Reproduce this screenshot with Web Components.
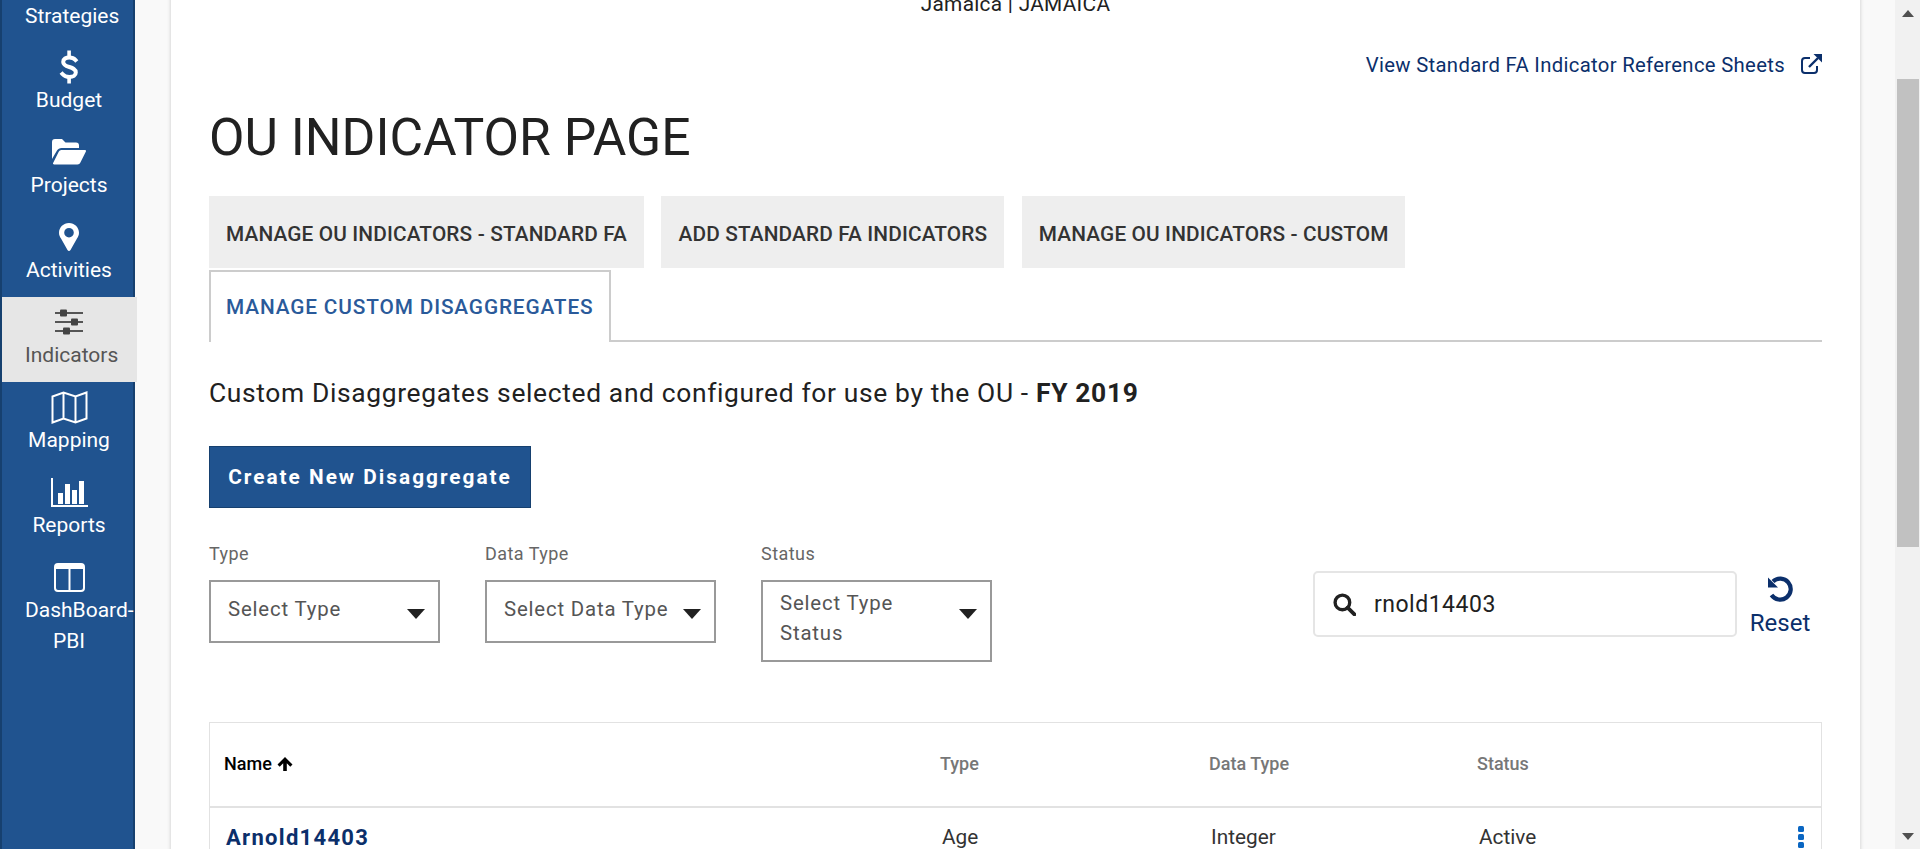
<!DOCTYPE html>
<html>
<head>
<meta charset="utf-8">
<style>
html, body { margin: 0; height: 849px; overflow: hidden; background: #fff; }
body { font-family: Roboto, "Liberation Sans", sans-serif; color: #212121; }
</style>
</head>
<body>
<app-shell>
  <side-nav slot="nav">
    <nav-item first label="Strategies"></nav-item>
    <nav-item label="Budget"><svg viewBox="0 0 20 34" width="20" height="34"><path d="M16.500 10C15 8.200 12.800 7.400 10.300 7.400 7 7.400 4.200 8.900 4.200 11.900c0 6.400 12.600 3.800 12.600 10.600 0 3-2.800 4.500-6.400 4.500-2.900 0-5.300-1-7-3" fill="none" stroke="#fff" stroke-width="4" stroke-linecap="square"/><path d="M8.300 0.500h3.600V8H8.300zM8.300 26h3.600v7.500H8.300z" fill="#fff"/></svg></nav-item>
    <nav-item label="Projects"><svg viewBox="0 0 34 26" width="34" height="26"><path d="M0 3a3 3 0 0 1 3-3h7l3.500 3.500H24a3 3 0 0 1 3 3V9H9.500C7.500 9 6 10 5 11.500L0 20z" fill="#fff"/><path d="M9.500 11H33c1 0 1.300.7.900 1.400l-5.500 11c-.6 1.200-1.500 2-3 2H2c-1 0-1.300-.7-.9-1.400l5.500-11C7.200 11.800 8.200 11 9.500 11z" fill="#fff"/></svg></nav-item>
    <nav-item label="Activities"><svg viewBox="0 0 20 28" width="20" height="28"><path fill-rule="evenodd" d="M10 0C4.500 0 0 4.300 0 9.700c0 2.400.8 3.900 2 5.900l6.500 11.400c.7 1.300 2.300 1.300 3 0L18 15.600c1.200-2 2-3.500 2-5.900C20 4.300 15.500 0 10 0zm0 14.500a4.800 4.800 0 1 1 0-9.600 4.800 4.800 0 0 1 0 9.600z" fill="#fff"/></svg></nav-item>
    <nav-item active label="Indicators"><svg viewBox="0 0 28 26" width="28" height="26" fill="#444"><path d="M0 3h28v2H0zM0 12h28v2H0zM0 21h28v2H0z" fill="#555"/><rect x="5" y="0.500" width="7" height="7" rx="1"/><rect x="16" y="9.500" width="7" height="7" rx="1"/><rect x="8" y="18.500" width="7" height="7" rx="1"/></svg></nav-item>
    <nav-item label="Mapping"><svg viewBox="0 0 37 33" width="37" height="33"><path d="M1.500 5.500L12.500 1.500 24.500 5.500 35.500 1.500V27.500L24.500 31.500 12.500 27.500 1.500 31.500zM12.500 1.500V27.500M24.500 5.500V31.500" fill="none" stroke="#fff" stroke-width="2"/></svg></nav-item>
    <nav-item label="Reports"><svg viewBox="0 0 37 29" width="37" height="29"><path d="M0 0h2v27h35v2H0z" fill="#fff"/><path d="M7 15h5v11H7zM14 6h5v20h-5zM21 12h5v14h-5zM28 3h5v23h-5z" fill="#fff"/></svg></nav-item>
    <nav-item label="DashBoard-PBI"><svg viewBox="0 0 31 29" width="31" height="29"><rect x="1" y="1" width="29" height="27" rx="3" fill="none" stroke="#fff" stroke-width="2"/><path d="M1 3a2 2 0 0 1 2-2h25a2 2 0 0 1 2 2v3H1z" fill="#fff"/><path d="M14.500 2h2v25h-2z" fill="#fff"/></svg></nav-item>
  </side-nav>

  <page-card>
    <div class="ou" style="text-align:center;font-size:20.8px;line-height:30px;color:#212121;letter-spacing:.3px">Jamaica | JAMAICA</div>
    <ref-link>View Standard FA Indicator Reference Sheets</ref-link>
    <page-title>OU INDICATOR PAGE</page-title>
    <tab-bar>
      <tab-item>MANAGE OU INDICATORS - STANDARD FA</tab-item>
      <tab-item>ADD STANDARD FA INDICATORS</tab-item>
      <tab-item>MANAGE OU INDICATORS - CUSTOM</tab-item>
      <tab-item slot="second" active>MANAGE CUSTOM DISAGGREGATES</tab-item>
    </tab-bar>
    <section-head>Custom Disaggregates selected and configured for use by the OU - <b>FY 2019</b></section-head>
    <primary-button>Create New Disaggregate</primary-button>
    <filter-row>
      <filter-select label="Type">Select Type</filter-select>
      <filter-select label="Data Type">Select Data Type</filter-select>
      <filter-select label="Status">Select Type Status</filter-select>
      <search-box slot="search">rnold14403</search-box>
    </filter-row>
    <disagg-table></disagg-table>
  </page-card>

  <fake-scrollbar slot="scroll"></fake-scrollbar>
</app-shell>

<script>
// small helper so every element gets its shadow the same way
function shadow(el, html) {
    el.attachShadow({ mode: 'open' });
    const template = document.createElement('template');
    template.innerHTML = html;
    el.shadowRoot.appendChild(template.content.cloneNode(true));
}

class AppShell extends HTMLElement {
    constructor() {
        super();
        shadow(this, `
        <style>
            :host { display: flex; height: 849px; overflow: hidden; background: #f9f9f9; }
            main { flex: 1; min-width: 0; padding: 0 35px 0 36px; }
        </style>
        <slot name="nav"></slot>
        <main><slot></slot></main>
        <slot name="scroll"></slot>`);
    }
}

class SideNav extends HTMLElement {
    constructor() {
        super();
        shadow(this, `
        <style>
            :host { display: block; width: 131px; flex: none; height: 849px; background: #20538f;
                    border-left: 2px solid #16406f; border-right: 2px solid #16406f; }
        </style>
        <slot></slot>`);
    }
}

class NavItem extends HTMLElement {
    constructor() {
        super();
        shadow(this, `
        <style>
            :host { display: block; height: 85px; width: 131px; box-sizing: border-box; padding: 8px 20px 0 23px;
                    color: #fff; font-size: 21px; line-height: 31px; text-align: center; }
            :host([active]) { background: #e6e6e6; color: #555; width: 135px; padding-right: 24px; }
            :host([first]) { height: 42px; padding-top: 1px; }
            .icon { height: 34px; display: flex; align-items: center; justify-content: center; }
            .label { margin-top: 1px; }
            :host([first]) .icon { display: none; }
            :host([first]) .label { margin-top: 0; }
        </style>
        <div class="icon"><slot></slot></div>
        <div class="label"></div>`);
        this.shadowRoot.querySelector('.label').textContent = this.getAttribute('label');
    }
}

class PageCard extends HTMLElement {
    constructor() {
        super();
        shadow(this, `
        <style>
            :host { display: block; background: #fff; padding: 0 38px; height: 880px; margin-top: -11px;
                    box-shadow: 0 0 4px rgba(0,0,0,.2); }
        </style>
        <slot></slot>`);
    }
}

class RefLink extends HTMLElement {
    constructor() {
        super();
        shadow(this, `
        <style>
            :host { display: flex; justify-content: flex-end; align-items: center; gap: 16px; margin-top: 31px;
                    height: 30px; font-size: 20.3px; letter-spacing: .32px; color: #0b2f6b; }
            svg { display: block; margin-top: -3px; }
        </style>
        <span><slot></slot></span>
        <svg viewBox="0 0 21 20" width="21" height="20"><path d="M9 4H4a3 3 0 0 0-3 3v9a3 3 0 0 0 3 3h9a3 3 0 0 0 3-3v-4" fill="none" stroke="#0b2f6b" stroke-width="2"/><path d="M8 13L17 4" stroke="#0b2f6b" stroke-width="2.400" fill="none"/><path d="M12.500 0H21v8.500z" fill="#0b2f6b"/></svg>`);
    }
}

class PageTitle extends HTMLElement {
    constructor() {
        super();
        shadow(this, `
        <style>
            :host { display: block; margin-top: 31px; height: 54px; line-height: 54px; font-size: 51.6px;
                    font-weight: 400; color: #212121; margin-bottom: 31px; }
        </style>
        <slot></slot>`);
    }
}

class TabBar extends HTMLElement {
    constructor() {
        super();
        shadow(this, `
        <style>
            :host { display: flex; flex-direction: column; gap: 2px; border-bottom: 2px solid #ccc; }
            .row { display: flex; gap: 17.500px; }
        </style>
        <div class="row"><slot></slot></div>
        <div class="row"><slot name="second"></slot></div>`);
    }
}

class TabItem extends HTMLElement {
    constructor() {
        super();
        shadow(this, `
        <style>
            :host { display: block; box-sizing: border-box; height: 72px; line-height: 76px; padding: 0 17px;
                    background: #eee; color: #333; font-size: 20.8px; font-weight: 500; letter-spacing: .14px; }
            :host([active]) { background: #fff; color: #2a5a9a; border: 2px solid #ccc; border-bottom: 0;
                    padding: 0 16px 0 15px; line-height: 70px; letter-spacing: .86px; margin-bottom: -2px; }
        </style>
        <slot></slot>`);
    }
}

class SectionHead extends HTMLElement {
    constructor() {
        super();
        shadow(this, `
        <style>
            :host { display: block; margin-top: 33px; height: 36px; line-height: 36px; font-size: 26.4px;
                    letter-spacing: .65px; color: #212121; }
        </style>
        <slot></slot>`);
    }
}

class PrimaryButton extends HTMLElement {
    constructor() {
        super();
        shadow(this, `
        <style>
            :host { display: block; width: 322px; height: 62px; box-sizing: border-box; margin-top: 35px;
                    background: #20538f; border: 1px solid #16406f; color: #fff; text-align: center;
                    line-height: 60px; font-size: 20.8px; font-weight: 700; letter-spacing: 2px; }
        </style>
        <slot></slot>`);
    }
}

class FilterRow extends HTMLElement {
    constructor() {
        super();
        shadow(this, `
        <style>
            :host { display: flex; align-items: flex-start; gap: 45px; margin-top: 32px; height: 182px; }
            .right { margin-left: auto; }
        </style>
        <slot></slot>
        <div class="right"><slot name="search"></slot></div>`);
    }
}

class FilterSelect extends HTMLElement {
    constructor() {
        super();
        shadow(this, `
        <style>
            :host { display: block; width: 231px; }
            label { display: block; height: 40px; line-height: 28px; font-size: 18px; color: #666; letter-spacing: .45px; }
            .box { position: relative; box-sizing: border-box; width: 231px; min-height: 63px; border: 2px solid #999;
                   padding: 6px 36px 12px 17px; display: flex; align-items: center; font-size: 20.4px; line-height: 30px;
                   color: #555; letter-spacing: .82px; }
            .arrow { position: absolute; top: 27px; right: 13px; width: 0; height: 0;
                   border-left: 9px solid transparent; border-right: 9px solid transparent; border-top: 10px solid #212121; }
        </style>
        <label></label>
        <div class="box"><span><slot></slot></span><i class="arrow"></i></div>`);
        this.shadowRoot.querySelector('label').textContent = this.getAttribute('label');
    }
}

class SearchBox extends HTMLElement {
    constructor() {
        super();
        shadow(this, `
        <style>
            :host { display: flex; align-items: flex-start; gap: 13px; margin-top: 31px; margin-right: 12px; }
            .box { box-sizing: border-box; width: 424px; height: 66px; border: 2px solid #e5e5e5; border-radius: 5px;
                   display: flex; align-items: center; padding-left: 18px; gap: 18px; font-size: 23px; color: #212121;
                   letter-spacing: .5px; }
            .reset { display: flex; flex-direction: column; align-items: center; width: 60px; color: #0b2f6b;
                   font-size: 24px; line-height: 30px; padding-top: 4px; }
            .reset span { margin-top: 5px; }
            svg { display: block; }
        </style>
        <div class="box">
            <svg viewBox="0 0 22 22" width="23" height="23"><circle cx="9" cy="9" r="7" fill="none" stroke="#212121" stroke-width="3.200"/><path d="M14 14l6.500 6.500" stroke="#212121" stroke-width="3.600" stroke-linecap="round"/></svg>
            <span><slot></slot></span>
        </div>
        <div class="reset">
            <svg viewBox="0 0 28 28" width="28" height="28"><path d="M7 6.500A10.500 10.500 0 1 1 5.500 20" fill="none" stroke="#0b2f6b" stroke-width="4.200"/><path d="M2 2.500v10h10z" fill="#0b2f6b"/></svg>
            <span>Reset</span>
        </div>`);
    }
}

class DisaggTable extends HTMLElement {
    constructor() {
        super();
        shadow(this, `
        <style>
            :host { display: block; border: 1px solid #e2e2e2; border-bottom: 0; }
            .row { display: grid; grid-template-columns: 730px 269px 268px 1fr 40px; align-items: center; }
            .head { height: 81px; padding-bottom: 2px; border-bottom: 2px solid #e2e2e2; font-size: 18px; font-weight: 500; color: #777; }
            .head .name { color: #000; padding-left: 14px; display: flex; align-items: center; gap: 5px; }
            .body { height: 58px; font-size: 20.8px; color: #333; }
            .body .name { padding-left: 16px; font-size: 22px; font-weight: 700; color: #0b2f6b; letter-spacing: 1.300px; }
            .body div { padding-left: 2px; }
            .kebab { display: flex; flex-direction: column; gap: 2px; align-items: center; padding: 0 !important; }
            .kebab i { width: 6px; height: 6px; border-radius: 1.500px; background: #0a66c2; }
        </style>
        <div class="row head">
            <div class="name">Name <svg viewBox="0 0 16 14" width="16" height="14"><path d="M8 0L.5 7.500l2.200 2.200L6.200 6.200V14h3.600V6.200l3.500 3.500 2.200-2.200z" fill="#000"/></svg></div>
            <div>Type</div><div>Data Type</div><div>Status</div><div></div>
        </div>
        <div class="row body">
            <div class="name">Arnold14403</div>
            <div>Age</div><div>Integer</div><div>Active</div>
            <div class="kebab"><i></i><i></i><i></i></div>
        </div>`);
    }
}

class FakeScrollbar extends HTMLElement {
    constructor() {
        super();
        shadow(this, `
        <style>
            :host { display: flex; flex-direction: column; align-items: stretch; width: 25px; flex: none; height: 849px;
                    background: #f1f1f1; }
            .up, .down { height: 26px; display: flex; align-items: center; justify-content: center; }
            .up i { border-left: 6px solid transparent; border-right: 6px solid transparent; border-bottom: 7px solid #505050; }
            .down i { border-left: 6px solid transparent; border-right: 6px solid transparent; border-top: 7px solid #505050; }
            .track { flex: 1; padding: 53px 1px 0 2px; }
            .thumb { height: 468px; background: #c1c1c1; }
        </style>
        <div class="up"><i></i></div>
        <div class="track"><div class="thumb"></div></div>
        <div class="down"><i></i></div>`);
    }
}

customElements.define('app-shell', AppShell);
customElements.define('side-nav', SideNav);
customElements.define('nav-item', NavItem);
customElements.define('page-card', PageCard);
customElements.define('ref-link', RefLink);
customElements.define('page-title', PageTitle);
customElements.define('tab-bar', TabBar);
customElements.define('tab-item', TabItem);
customElements.define('section-head', SectionHead);
customElements.define('primary-button', PrimaryButton);
customElements.define('filter-row', FilterRow);
customElements.define('filter-select', FilterSelect);
customElements.define('search-box', SearchBox);
customElements.define('disagg-table', DisaggTable);
customElements.define('fake-scrollbar', FakeScrollbar);
</script>
</body>
</html>
